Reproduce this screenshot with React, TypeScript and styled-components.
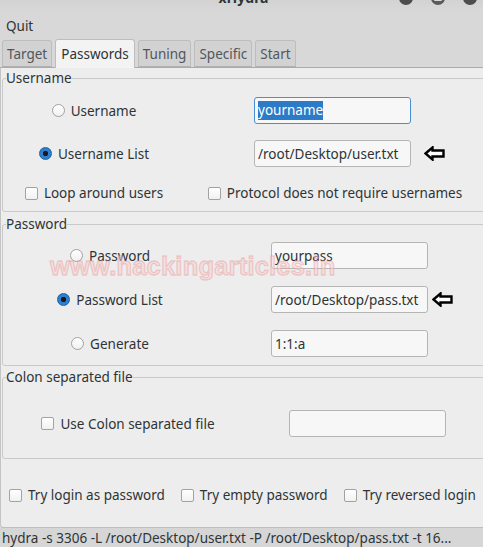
import React from "react";
import styled, { createGlobalStyle } from "styled-components";

const FS = "13.5px";

const Global = createGlobalStyle`
  html, body { margin: 0; padding: 0; overflow: hidden; background: #d8d8d8; }
  body {
    font-family: "Noto Sans", "DejaVu Sans", sans-serif;
    font-size: ${FS};
    color: #2e3436;
  }
`;

const Window = styled.div`
  position: relative;
  width: 483px;
  height: 547px;
  overflow: hidden;
  display: flex;
  flex-direction: column;
  background: #d8d8d8;
`;

const TitleBar = styled.div`
  height: 12px;
  display: grid;
  grid-template-columns: 1fr auto 1fr;
  overflow: hidden;
  background: linear-gradient(#d2d2d2, #d8d8d8);
`;

const TitleText = styled.div`
  grid-column: 2;
  margin-top: -10px;
  margin-left: 4px;
  font-weight: bold;
  font-size: 14px;
  line-height: 16px;
  color: #2e3436;
`;

const Controls = styled.div`
  grid-column: 3;
  justify-self: end;
  display: flex;
  gap: 18px;
  margin-top: -9px;
  margin-right: 6px;
`;

const WinButton = styled.span<{ $light?: boolean }>`
  width: 14px;
  height: 14px;
  border-radius: 50%;
  background: ${(p) => (p.$light ? "#5a5a5a" : "#4d4d4d")};
  display: flex;
  align-items: flex-end;
  justify-content: center;
  &::after {
    content: "";
    display: ${(p) => (p.$light ? "block" : "none")};
    width: 8px;
    height: 7px;
    margin-bottom: 4px;
    background: #d8d8d8;
    border-radius: 1px;
  }
`;

const MenuBar = styled.div`
  height: 26px;
  display: flex;
  align-items: center;
  padding-left: 6px;
  padding-top: 1px;
  box-sizing: border-box;
`;

const MenuItem = styled.span`
  font-size: ${FS};
  color: #2e3436;
`;

const TabBar = styled.div`
  height: 29px;
  display: flex;
  align-items: flex-end;
  gap: 3px;
  padding-left: 2px;
  position: relative;
  z-index: 1;
`;

const Tab = styled.div<{ $active?: boolean }>`
  height: ${(p) => (p.$active ? "29px" : "27px")};
  margin-bottom: ${(p) => (p.$active ? "-1px" : "0")};
  box-sizing: border-box;
  padding: 0 ${(p) => (p.$active ? "5px" : "4px")};
  display: flex;
  align-items: center;
  border: 1px solid #bdbdbd;
  border-bottom: ${(p) => (p.$active ? "none" : "1px solid #b0b0b0")};
  border-radius: 3px 3px 0 0;
  background: ${(p) => (p.$active ? "#f3f3f3" : "#d2d2d2")};
  color: ${(p) => (p.$active ? "#2e3436" : "#50575a")};
  font-size: ${FS};
`;

const Page = styled.div`
  flex: 1;
  display: flex;
  flex-direction: column;
  background: #ededed;
  border-top: 1px solid #ababab;
  border-left: 1px solid #c4c4c4;
  border-bottom: 1px solid #bfbfbf;
  border-bottom-left-radius: 4px;
`;

const Frame = styled.fieldset<{ $top: number; $pt: number; $pb: number }>`
  margin: ${(p) => p.$top}px -3px 0 1px;
  padding: ${(p) => p.$pt}px 0 ${(p) => p.$pb}px 0;
  border: 1px solid #c9c9c9;
  border-radius: 3px;
  display: flex;
  flex-direction: column;
  min-width: 0;
`;

const Legend = styled.legend`
  margin-left: 3px;
  padding: 0;
  font-size: ${FS};
  line-height: 16px;
  color: #2e3436;
`;

const Row = styled.div<{ $col: number; $h: number; $gap?: number }>`
  display: grid;
  grid-template-columns: ${(p) => p.$col}px 1fr;
  align-items: center;
  height: ${(p) => p.$h}px;
  margin-top: ${(p) => p.$gap ?? 0}px;
`;

const Option = styled.label`
  justify-self: center;
  display: flex;
  align-items: center;
  gap: 6px;
  white-space: nowrap;
  font-size: ${FS};
  color: #2e3436;
`;

const Radio = styled.span<{ $on?: boolean }>`
  width: 13px;
  height: 13px;
  box-sizing: border-box;
  border-radius: 50%;
  border: 1px solid ${(p) => (p.$on ? "#1f5e9e" : "#a2a2a2")};
  background: ${(p) =>
    p.$on
      ? "radial-gradient(circle, #1b1b1b 0 2.4px, #2f7fcf 3px)"
      : "linear-gradient(#ffffff, #f1f1f1)"};
  flex: none;
`;

const Check = styled.span`
  width: 13px;
  height: 13px;
  box-sizing: border-box;
  border-radius: 2px;
  border: 1px solid #a2a2a2;
  background: linear-gradient(#ffffff, #f1f1f1);
  flex: none;
`;

const InputCell = styled.div<{ $pad: number }>`
  display: flex;
  align-items: center;
  padding-left: ${(p) => p.$pad}px;
`;

const Entry = styled.div<{ $focus?: boolean }>`
  width: 157px;
  height: 27px;
  box-sizing: border-box;
  border: 1px solid ${(p) => (p.$focus ? "#4a8fd4" : "#b5b5b5")};
  border-radius: 3px;
  background: #f7f7f7;
  padding: 0 3px;
  display: flex;
  align-items: center;
  white-space: nowrap;
  overflow: hidden;
  font-size: ${FS};
  color: #2e3436;
  flex: none;
`;

const Selected = styled.span`
  display: inline-block;
  line-height: 19px;
  background: #2b7bc7;
  color: #ffffff;
`;

const ArrowWrap = styled.span<{ $ml: number }>`
  margin-left: ${(p) => p.$ml}px;
  display: flex;
  align-items: center;
`;

const CheckRow = styled.div`
  margin-top: 26px;
  height: 20px;
  display: flex;
  align-items: center;
  gap: 16px;
  padding-left: 8px;
`;

const StatusBar = styled.div`
  height: 19px;
  box-sizing: border-box;
  padding: 2px 0 0 2px;
  line-height: 17px;
  font-size: ${FS};
  white-space: nowrap;
  overflow: hidden;
  color: #2e3436;
  background: #d6d6d6;
`;

const Watermark = styled.div`
  position: absolute;
  left: 50px;
  top: 252px;
  font-family: "Liberation Sans", Arial, sans-serif;
  font-weight: bold;
  font-size: 25.5px;
  letter-spacing: 0.2px;
  color: rgba(246, 210, 210, 0.5);
  -webkit-text-stroke: 1.3px rgba(232, 150, 150, 0.42);
  pointer-events: none;
  white-space: nowrap;
`;

const Arrow = () => (
  <svg width="21" height="15" viewBox="0 0 21 15">
    <polygon
      points="1.5,7.5 8.5,1.5 8.5,4.5 19.5,4.5 19.5,10.5 8.5,10.5 8.5,13.5"
      fill="#ffffff"
      stroke="#000000"
      strokeWidth="2.4"
      strokeLinejoin="miter"
    />
  </svg>
);

export default function App() {
  return (
    <>
      <Global />
      <Window>
        <TitleBar>
          <TitleText>xHydra</TitleText>
          <Controls>
            <WinButton />
            <WinButton $light />
            <WinButton />
          </Controls>
        </TitleBar>
        <MenuBar>
          <MenuItem>Quit</MenuItem>
        </MenuBar>
        <TabBar>
          <Tab>Target</Tab>
          <Tab $active>Passwords</Tab>
          <Tab>Tuning</Tab>
          <Tab>Specific</Tab>
          <Tab>Start</Tab>
        </TabBar>
        <Page>
          <Frame $top={2} $pt={11} $pb={8}>
            <Legend>Username</Legend>
            <Row $col={182} $h={27}>
              <Option>
                <Radio />
                Username
              </Option>
              <InputCell $pad={69}>
                <Entry $focus>
                  <Selected>yourname</Selected>
                </Entry>
              </InputCell>
            </Row>
            <Row $col={182} $h={27} $gap={16}>
              <Option>
                <Radio $on />
                Username List
              </Option>
              <InputCell $pad={69}>
                <Entry>/root/Desktop/user.txt</Entry>
                <ArrowWrap $ml={13}>
                  <Arrow />
                </ArrowWrap>
              </InputCell>
            </Row>
            <Row $col={182} $h={20} $gap={16}>
              <Option>
                <Check />
                Loop around users
              </Option>
              <Option>
                <Check />
                Protocol does not require usernames
              </Option>
            </Row>
          </Frame>

          <Frame $top={4} $pt={10} $pb={8}>
            <Legend>Password</Legend>
            <Row $col={214} $h={27}>
              <Option>
                <Radio />
                Password
              </Option>
              <InputCell $pad={54}>
                <Entry>yourpass</Entry>
              </InputCell>
            </Row>
            <Row $col={214} $h={27} $gap={17}>
              <Option>
                <Radio $on />
                Password List
              </Option>
              <InputCell $pad={54}>
                <Entry>/root/Desktop/pass.txt</Entry>
                <ArrowWrap $ml={4}>
                  <Arrow />
                </ArrowWrap>
              </InputCell>
            </Row>
            <Row $col={214} $h={27} $gap={17}>
              <Option>
                <Radio />
                Generate
              </Option>
              <InputCell $pad={54}>
                <Entry>1:1:a</Entry>
              </InputCell>
            </Row>
          </Frame>

          <Frame $top={3} $pt={25} $pb={21}>
            <Legend>Colon separated file</Legend>
            <Row $col={250} $h={27}>
              <Option>
                <Check />
                Use Colon separated file
              </Option>
              <InputCell $pad={36}>
                <Entry />
              </InputCell>
            </Row>
          </Frame>

          <CheckRow>
            <Option>
              <Check />
              Try login as password
            </Option>
            <Option>
              <Check />
              Try empty password
            </Option>
            <Option>
              <Check />
              Try reversed login
            </Option>
          </CheckRow>
        </Page>
        <StatusBar>
          hydra -s 3306 -L /root/Desktop/user.txt -P /root/Desktop/pass.txt -t 16...
        </StatusBar>
        <Watermark>www.hackingarticles.in</Watermark>
      </Window>
    </>
  );
}
